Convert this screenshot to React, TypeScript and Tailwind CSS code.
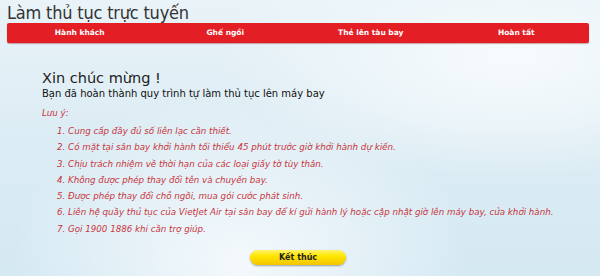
import React from 'react';

const steps = ['Hành khách', 'Ghế ngồi', 'Thẻ lên tàu bay', 'Hoàn tất'];

const notes = [
  'Cung cấp đầy đủ số liên lạc cần thiết.',
  'Có mặt tại sân bay khởi hành tối thiểu 45 phút trước giờ khởi hành dự kiến.',
  'Chịu trách nhiệm về thời hạn của các loại giấy tờ tùy thân.',
  'Không được phép thay đổi tên và chuyến bay.',
  'Được phép thay đổi chỗ ngồi, mua gói cước phát sinh.',
  'Liên hệ quầy thủ tục của VietJet Air tại sân bay để kí gửi hành lý hoặc cập nhật giờ lên máy bay, cửa khởi hành.',
  'Gọi 1900 1886 khi cần trợ giúp.',
];

export default function App() {
  return (
    <div
      className="w-[600px] h-[276px] overflow-hidden font-['DejaVu_Sans',Verdana,sans-serif] bg-[radial-gradient(ellipse_at_85%_20%,#f7fbfd_0%,#eef6fa_18%,transparent_40%),radial-gradient(ellipse_at_40%_95%,#f4f9fc_0%,transparent_45%),linear-gradient(180deg,#e9f3f8_0%,#dcecf4_50%,#d5e9f3_100%)]"
    >
      <h1 className="pl-[7px] pt-[2px] text-[18px] leading-[21px] text-[#333] font-['DejaVu_Sans_Condensed','DejaVu_Sans',sans-serif] tracking-[-0.2px]">
        Làm thủ tục trực tuyến
      </h1>

      <div className="mx-[7px] mr-[11px] h-[20px] flex bg-[#e31e24] rounded-[2px] shadow-[0_1px_1px_rgba(120,0,0,0.35)]">
        {steps.map((s) => (
          <div key={s} className="flex-1 flex items-center justify-center text-white font-bold text-[7.5px]">
            {s}
          </div>
        ))}
      </div>

      <div className="pl-[42px] pt-[27px]">
        <div className="text-[14.5px] leading-[17px] text-[#222]">Xin chúc mừng !</div>
        <div className="text-[10px] leading-[14px] text-[#111]">
          Bạn đã hoàn thành quy trình tự làm thủ tục lên máy bay
        </div>

        <div className="mt-[6px] text-[8.7px] leading-[12px] italic text-[#c8343b]">Lưu ý:</div>
        <ol className="mt-[6px] pl-[15px] text-[8.7px] italic text-[#c8343b]">
          {notes.map((n, i) => (
            <li key={i} className="h-[16.3px] leading-[12px] whitespace-nowrap">
              {i + 1}. {n}
            </li>
          ))}
        </ol>
      </div>

      <div className="flex justify-center pt-[11px] pr-[4px]">
        <button className="w-[96px] h-[15px] rounded-full bg-[linear-gradient(180deg,#fff36a_0%,#ffe600_40%,#f3c400_100%)] shadow-[0_1px_2px_rgba(0,0,0,0.35)] text-[8px] font-bold text-[#222]">
          Kết thúc
        </button>
      </div>
    </div>
  );
}
